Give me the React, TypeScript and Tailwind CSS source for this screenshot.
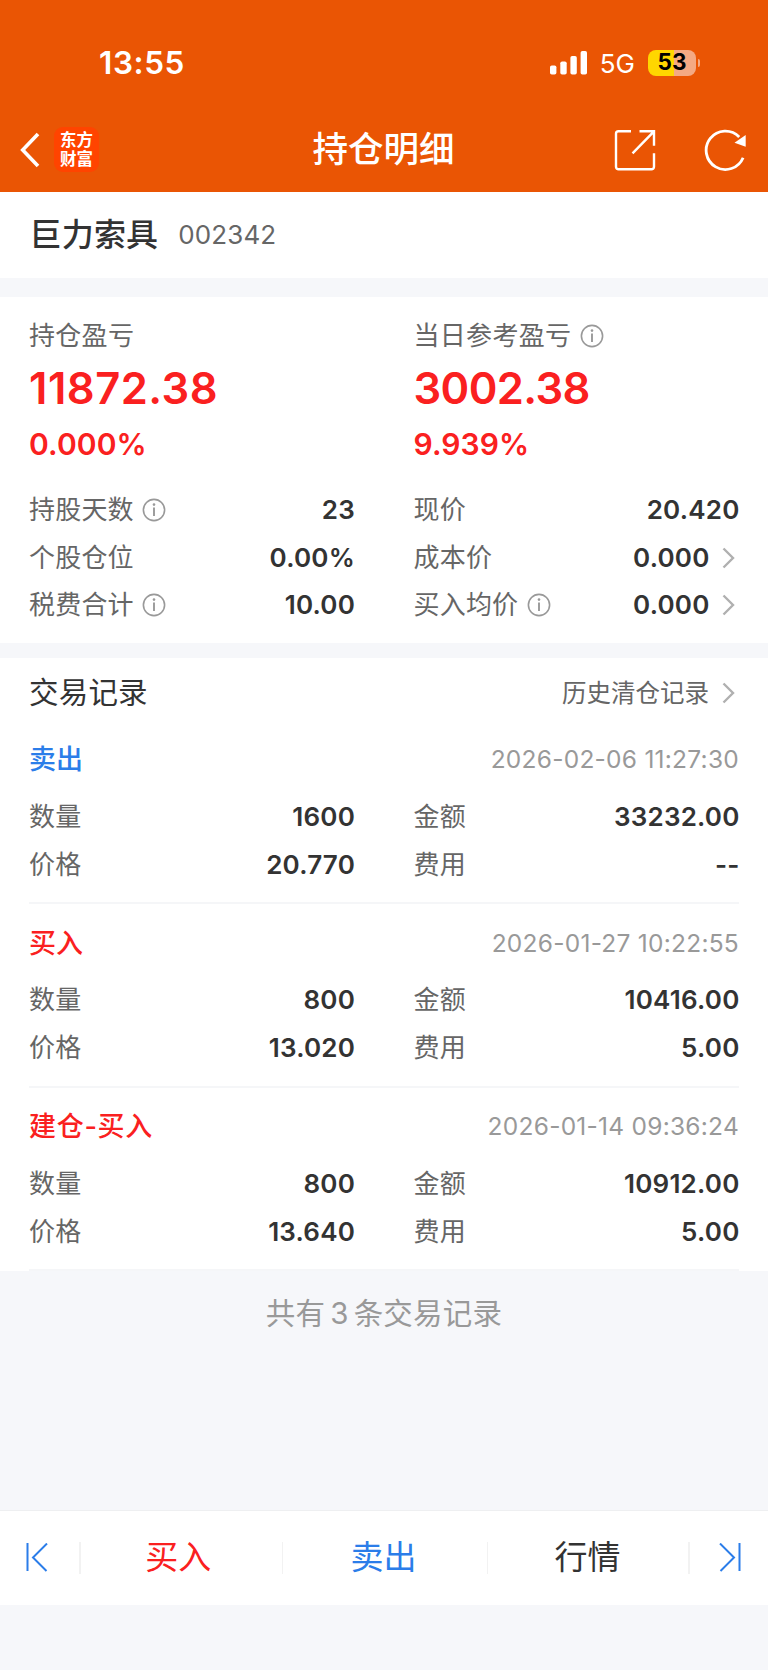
import type { ReactNode } from "react";

const SANS = "font-[Inter,'Noto_Sans_CJK_SC',sans-serif]";

type Trade = {
  kind: string;
  color: string;
  time: string;
  qty: string;
  amount: string;
  price: string;
  fee: string;
};

const TRADES: Trade[] = [
  { kind: "卖出", color: "text-[#2b7de9]", time: "2026-02-06 11:27:30", qty: "1600", amount: "33232.00", price: "20.770", fee: "--" },
  { kind: "买入", color: "text-[#fa2020]", time: "2026-01-27 10:22:55", qty: "800", amount: "10416.00", price: "13.020", fee: "5.00" },
  { kind: "建仓-买入", color: "text-[#fa2020] tracking-[0.7px]", time: "2026-01-14 09:36:24", qty: "800", amount: "10912.00", price: "13.640", fee: "5.00" },
];

function InfoIcon() {
  return (
    <svg width="24" height="24" viewBox="0 0 24 24" fill="none" stroke="#999" className="ml-[8.5px] shrink-0">
      <circle cx="12" cy="12" r="10.6" strokeWidth="1.6" />
      <path d="M12 9.6V18" strokeWidth="1.9" />
      <circle cx="12" cy="6.6" r="1.3" fill="#999" stroke="none" />
    </svg>
  );
}

function Chevron() {
  return (
    <svg width="13" height="22" viewBox="0 0 13 22" fill="none" stroke="#b0b0b0" strokeWidth="2.4" className="mr-[4px] ml-[13px] shrink-0">
      <path d="M1.5 1.5 11 11 1.5 20.5" />
    </svg>
  );
}

function Row({ label, value, info, link }: { label: string; value: string; info?: boolean; link?: boolean }) {
  return (
    <div className="flex h-[47.7px] items-center">
      <span className="text-[26px] leading-none tracking-[0.2px] text-[#666]">{label}</span>
      {info && <InfoIcon />}
      <span className="-mr-[0.5px] ml-auto text-[26px] leading-none font-semibold tracking-[0.2px] text-[#333]">{value}</span>
      {link && <Chevron />}
    </div>
  );
}

function Summary({ label, amount, percent, info, tracking }: { label: string; amount: string; percent: string; info?: boolean; tracking: string }) {
  return (
    <div className="flex flex-col">
      <div className="flex h-[36px] items-center text-[26px] leading-none tracking-[0.3px] text-[#666]">
        {label}
        {info && <InfoIcon />}
      </div>
      <div className={`flex h-[70px] items-center text-[43.5px] leading-none font-semibold text-[#fa2020] ${tracking}`}>{amount}</div>
      <div className="flex h-[39px] items-center text-[30px] leading-none font-[580] tracking-[0.1px] text-[#fa2020]">{percent}</div>
    </div>
  );
}

function TradeItem({ trade }: { trade: Trade }) {
  return (
    <div className="h-[183.5px] border-b-2 border-[#f5f6f8] pt-[15.5px]">
      <div className="flex h-[47px] items-center justify-between">
        <span className={`text-[27px] leading-none font-medium ${trade.color}`}>{trade.kind}</span>
        <span className="text-[24.5px] leading-none tracking-[0.25px] text-[#999]">{trade.time}</span>
      </div>
      <div className="grid grid-cols-2 gap-x-[59px] pt-[10px]">
        <Row label="数量" value={trade.qty} />
        <Row label="金额" value={trade.amount} />
        <Row label="价格" value={trade.price} />
        <Row label="费用" value={trade.fee} />
      </div>
    </div>
  );
}

function StatusBar() {
  return (
    <div className="flex h-[108px] items-center pt-[17px] pr-[68px] pl-[99px] text-white">
      <span className="text-[31.5px] leading-none font-semibold tracking-[0.6px]">13:55</span>
      <svg width="38" height="25" viewBox="0 0 38 25" fill="#fff" className="ml-auto">
        <rect x="0" y="15.5" width="6.4" height="9" rx="1.8" />
        <rect x="10.3" y="11.5" width="6.4" height="13" rx="1.8" />
        <rect x="20.4" y="6" width="6.4" height="18.5" rx="1.8" />
        <rect x="30.6" y="1" width="6.4" height="23.5" rx="1.8" />
      </svg>
      <span className="ml-[11.5px] pt-[2px] text-[26px] leading-none">5G</span>
      <div className="ml-[13px] flex h-[26px] w-[48px] items-center justify-center rounded-[8px] bg-linear-to-r from-[#ffd600] from-54% to-[#f4a983] to-54%">
        <span className="text-[22.5px] leading-none font-bold text-black">53</span>
      </div>
      <span className="ml-[2px] h-[8px] w-[2px] rounded-r-full bg-[#f4a983]" />
    </div>
  );
}

function NavBar() {
  return (
    <div className="grid h-[84px] grid-cols-3 items-center pr-[21px] pl-[20px] text-white">
      <div className="flex items-center">
        <svg width="20" height="36" viewBox="0 0 20 36" fill="none" stroke="#fff" strokeWidth="3.6">
          <path d="M18 2 2.7 18 18 34" />
        </svg>
        <div className="mb-[1px] ml-[14px] flex size-[45px] flex-col items-center justify-center rounded-[9px] bg-[#ff4400] text-[16.5px] leading-[18.5px] font-bold">
          <span>东方</span>
          <span>财富</span>
        </div>
      </div>
      <h1 className="text-center text-[35.5px] leading-none font-medium">持仓明细</h1>
      <div className="flex items-center justify-end gap-[48px]">
        <svg width="42" height="43" viewBox="0 0 42 43" fill="none" stroke="#fff" strokeWidth="2.4">
          <path d="M17 2.3H4.5A2.5 2.5 0 0 0 2 4.8V37.8A2.5 2.5 0 0 0 4.5 40.3H37.5A2.5 2.5 0 0 0 40 37.8V24.3" />
          <path d="M25.500 2.300H40V16.800M39.500 2.800 18.500 24.300" />
        </svg>
        <svg width="43" height="43" viewBox="0 0 43 43" fill="none" stroke="#fff" strokeWidth="2.8">
          <path d="M39.1 28.700A19.2 19.2 0 1 1 35.2 8" />
          <path d="M41.7 5.900V17.800L30.500 13.800Z" fill="#fff" stroke="none" />
        </svg>
      </div>
    </div>
  );
}

function BarItem({ children, className }: { children: ReactNode; className: string }) {
  return <div className={`flex h-[32px] items-center justify-center border-[#f2f2f2] ${className}`}>{children}</div>;
}

export default function App() {
  return (
    <div className={`flex h-[1670px] w-[768px] flex-col bg-[#f6f7fa] ${SANS}`}>
      <header className="h-[192px] bg-[#ea5504]">
        <StatusBar />
        <NavBar />
      </header>

      <div className="flex h-[86px] items-center bg-white px-[29.5px]">
        <span className="text-[32px] leading-none font-medium tracking-[0.2px] text-[#333]">巨力索具</span>
        <span className="ml-[20px] text-[26px] leading-none tracking-[0.1px] text-[#666]">002342</span>
      </div>

      <section className="mt-[19px] h-[346px] bg-white px-[29px] pt-[21px]">
        <div className="grid grid-cols-2 gap-x-[59px]">
          <Summary label="持仓盈亏" amount="11872.38" percent="0.000%" tracking="tracking-[0.5px]" />
          <Summary label="当日参考盈亏" amount="3002.38" percent="9.939%" tracking="tracking-[-0.6px]" info />
        </div>
        <div className="mt-[23px] grid grid-cols-2 gap-x-[59px]">
          <Row label="持股天数" value="23" info />
          <Row label="现价" value="20.420" />
          <Row label="个股仓位" value="0.00%" />
          <Row label="成本价" value="0.000" link />
          <Row label="税费合计" value="10.00" info />
          <Row label="买入均价" value="0.000" info link />
        </div>
      </section>

      <section className="mt-[15px] bg-white px-[29px]">
        <div className="flex h-[62.5px] items-center pt-[7px]">
          <h2 className="text-[29.5px] leading-none tracking-[0.2px] text-[#333]">交易记录</h2>
          <span className="ml-auto text-[24.5px] leading-none text-[#666]">历史清仓记录</span>
          <Chevron />
        </div>
        {TRADES.map((t) => (
          <TradeItem key={t.time} trade={t} />
        ))}
      </section>

      <p className="mt-[25.5px] text-center text-[29.5px] leading-[32px] tracking-[0.2px] text-[#999]">
        共有<span className="mx-[5px]">3</span>条交易记录
      </p>

      <nav className="mt-auto mb-[65px] flex h-[95.5px] items-center border-t border-[#eeeff1] bg-white text-[33px] leading-none">
        <BarItem className="w-[81px] border-r-2 pr-[6px]">
          <svg width="22" height="30" viewBox="0 0 22 30" fill="none" stroke="#2b7de9" strokeWidth="2">
            <path d="M1.5 0V28M21 0.500 7 14.500 20.500 28" />
          </svg>
        </BarItem>
        <BarItem className="w-[201.5px] border-r pr-[6px] text-[#fa2020]">买入</BarItem>
        <BarItem className="w-[205px] border-r pr-[2px] text-[#2b7de9]">卖出</BarItem>
        <BarItem className="w-[202px] border-r-2 text-[#333]">行情</BarItem>
        <svg width="22" height="30" viewBox="0 0 22 30" fill="none" stroke="#2b7de9" strokeWidth="2" className="ml-[29px]">
          <path d="M20.5 0V28M1 0.500 15 14.500 1.500 28" />
        </svg>
      </nav>
    </div>
  );
}
